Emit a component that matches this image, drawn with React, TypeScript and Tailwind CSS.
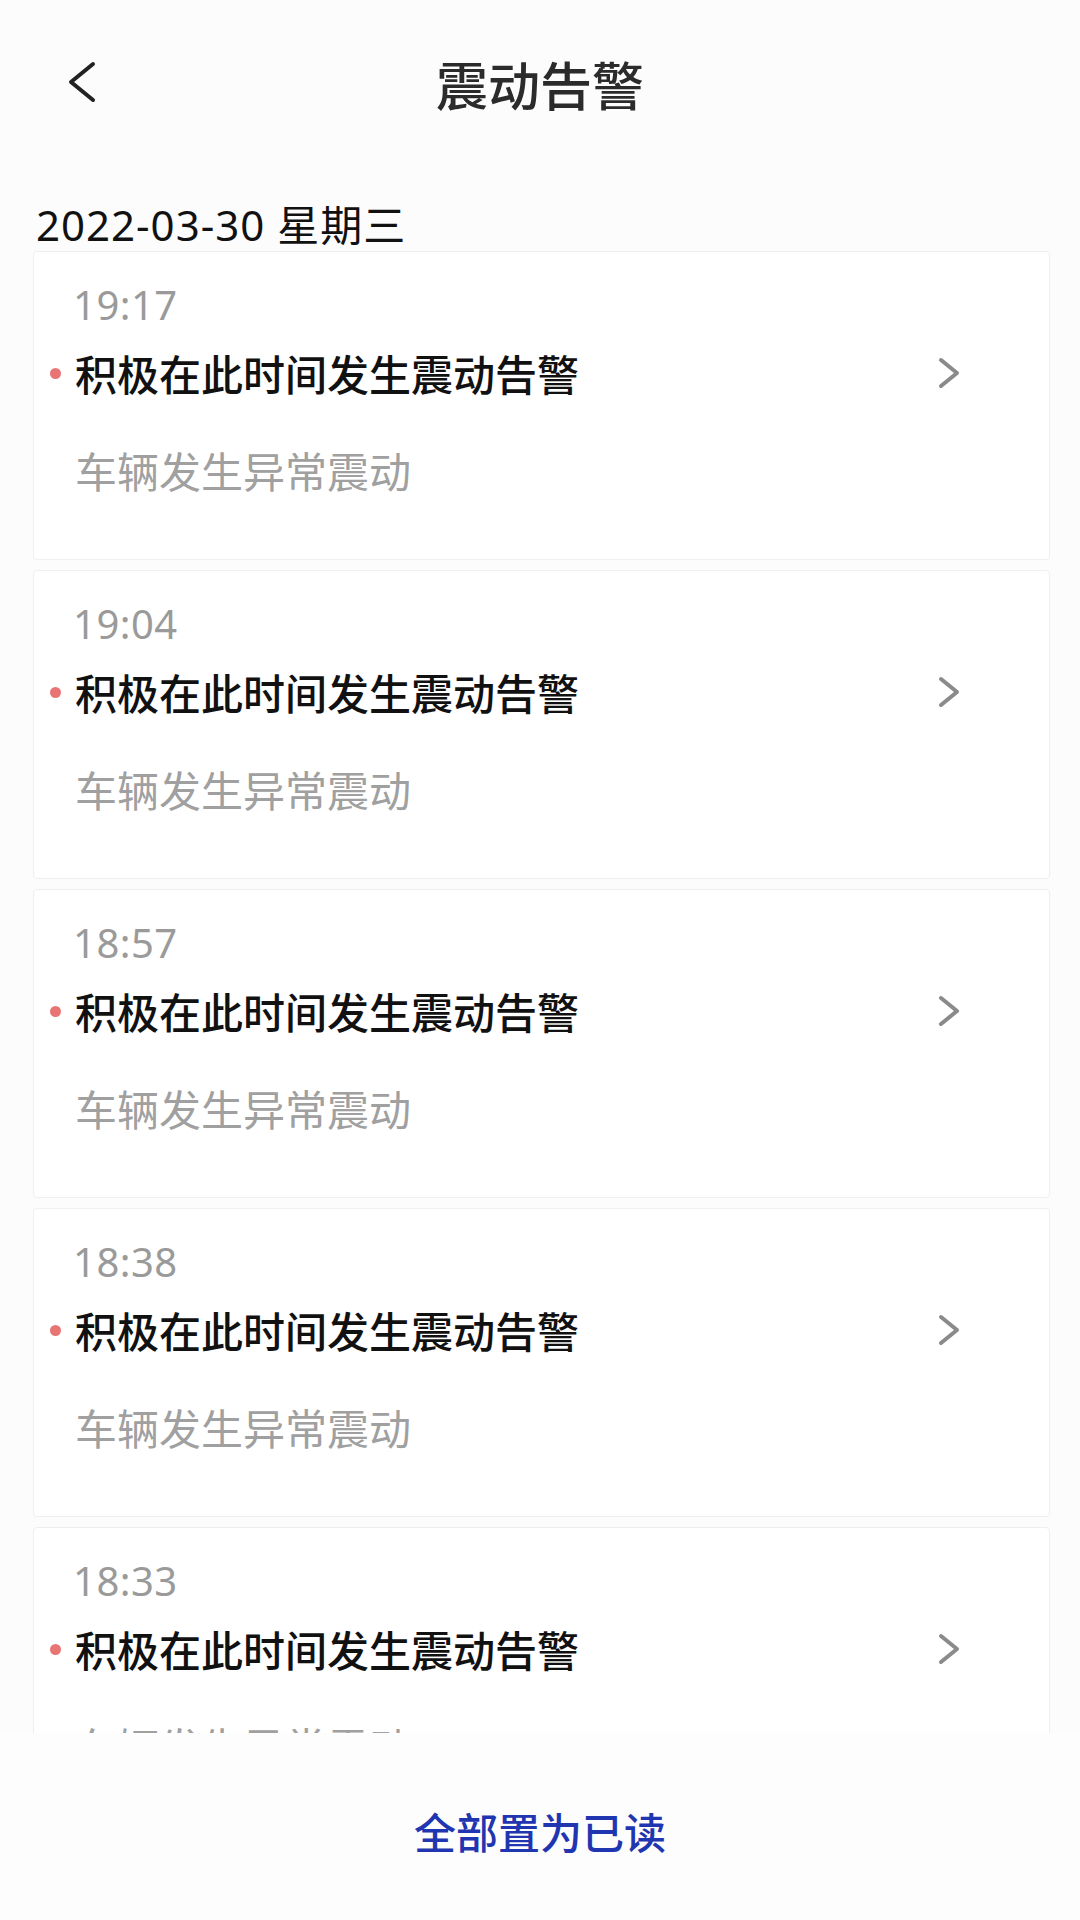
import React from 'react';

const cjk = "font-['Noto_Sans_CJK_SC','Noto_Sans',sans-serif]";
const latin = "font-['Noto_Sans','Noto_Sans_CJK_SC',sans-serif]";

const alerts = [
  { time: '19:17' },
  { time: '19:04' },
  { time: '18:57' },
  { time: '18:38' },
  { time: '18:33' },
];

function BackIcon() {
  return (
    <svg width="30" height="42" viewBox="0 0 30 42" fill="none">
      <polyline
        points="26,3 4,21 26,39"
        stroke="#222"
        strokeWidth="4"
        strokeLinecap="round"
        strokeLinejoin="round"
      />
    </svg>
  );
}

function ChevronRight() {
  return (
    <svg width="24" height="32" viewBox="0 0 24 32" fill="none">
      <polyline
        points="4,3 20,16 4,29"
        stroke="#8a8a8a"
        strokeWidth="4"
        strokeLinecap="round"
        strokeLinejoin="round"
      />
    </svg>
  );
}

function AlertCard({ time }: { time: string }) {
  return (
    <div className="mb-[10px] ml-[33px] mr-[30px] h-[309px] shrink-0 rounded-[4px] border border-[#efeff3] bg-white pt-[33px]">
      <div className={`${latin} pl-[39px] text-[40px] leading-[40px] tracking-[0.5px] text-[#9a9a9a]`}>{time}</div>

      {/* 标题行 */}
      <div className="mt-[24px] flex h-[48px] items-center pl-[16px] pr-[88px]">
        <span className="h-[11px] w-[11px] shrink-0 rounded-full bg-[#e87474]" />
        <span className="ml-[14px] flex-1 text-[42px] leading-[48px] font-medium text-[#111]">
          积极在此时间发生震动告警
        </span>
        <ChevronRight />
      </div>

      {/* 说明 */}
      <div className="mt-[51px] pl-[41px] text-[42px] leading-[44px] text-[#a0a0a0]">
        车辆发生异常震动
      </div>
    </div>
  );
}

export default function App() {
  return (
    <div className={`${cjk} flex h-[1920px] w-[1080px] flex-col overflow-hidden bg-[#fcfcfd]`}>
      {/* 顶部导航 */}
      <div className="relative flex h-[168px] shrink-0 items-center justify-center">
        <div className="absolute left-[67px] top-[61px]">
          <BackIcon />
        </div>
        <h1 className="text-[52px] leading-[60px] font-medium text-[#2b2b2b]">震动告警</h1>
      </div>

      {/* 日期 */}
      <div className={`${latin} shrink-0 pt-[33px] pl-[36px] text-[42px] leading-[48px] tracking-[1px] text-[#111]`}>
        2022-03-30 星期三
      </div>

      {/* 列表 */}
      <div className="mt-[2px] flex flex-1 flex-col overflow-hidden">
        {alerts.map((a, i) => (
          <AlertCard key={i} time={a.time} />
        ))}
      </div>

      {/* 底部按钮 */}
      <div className="flex h-[187px] shrink-0 items-center justify-center bg-[#fdfdfe]">
        <span className="mt-[9px] text-[42px] leading-[50px] font-medium text-[#1f36b0]">全部置为已读</span>
      </div>
    </div>
  );
}
